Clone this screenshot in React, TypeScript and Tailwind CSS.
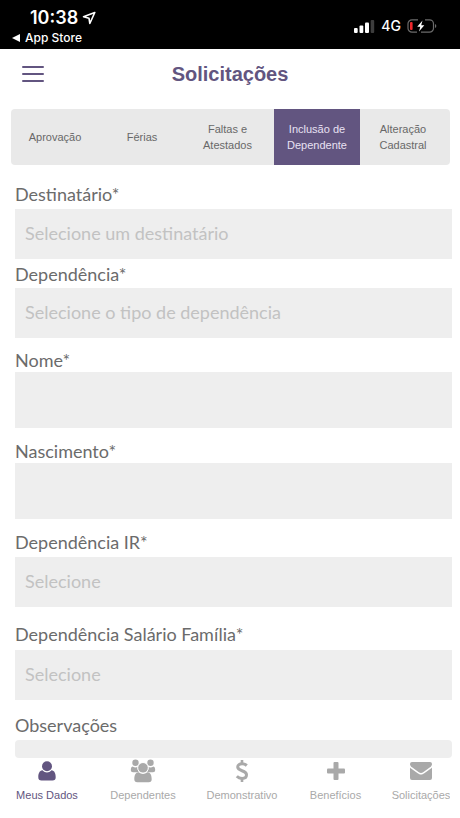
import React from "react";
import clsx from "clsx";

const tabs = [
  { label: "Aprovação", active: false },
  { label: "Férias", active: false },
  { label: "Faltas e Atestados", active: false },
  { label: "Inclusão de Dependente", active: true },
  { label: "Alteração Cadastral", active: false },
];

const fields = [
  { id: "destinatario", label: "Destinatário*", type: "select", placeholder: "Selecione um destinatário", className: "gap-1 pt-[18px]" },
  { id: "dependencia", label: "Dependência*", type: "select", placeholder: "Selecione o tipo de dependência", className: "gap-[3px] pt-1" },
  { id: "nome", label: "Nome*", type: "text", placeholder: "", className: "gap-px pt-[11px]" },
  { id: "nascimento", label: "Nascimento*", type: "text", placeholder: "", className: "gap-px pt-3" },
  { id: "dependencia-ir", label: "Dependência IR*", type: "select", placeholder: "Selecione", className: "gap-1 pt-3" },
  { id: "salario-familia", label: "Dependência Salário Família*", type: "select", placeholder: "Selecione", className: "gap-[5px] pt-4" },
];

function StatusBar() {
  return (
    <div className="flex h-[49px] shrink-0 justify-between bg-black font-['Inter',sans-serif] text-white">
      <div className="pt-[7px] pl-3">
        <div className="flex items-center gap-1 pl-[18px] text-lg leading-[22px] font-semibold">
          <span>10:38</span>
          <svg viewBox="0 0 14 14" className="h-[14px] w-[14px]" fill="none" stroke="currentColor" strokeWidth="1.6" strokeLinejoin="round">
            <path d="M12.800 1.500 1.500 5.800 7 7.200 7.800 12.500Z" />
          </svg>
        </div>
        <a href="#" className="flex items-center gap-[5px] text-xs leading-[18px] font-medium">
          <svg viewBox="0 0 8 8" className="h-2 w-2" fill="currentColor">
            <path d="M0 4 8 0V8Z" />
          </svg>
          App Store
        </a>
      </div>
      <div className="flex items-center gap-[6px] pt-[3px] pr-[23px]">
        <svg viewBox="0 0 21 14" className="h-[14px] w-[21px]">
          <rect x="0" y="9" width="3.700" height="5" rx="1" fill="#fff" />
          <rect x="5.500" y="6.500" width="3.800" height="7.500" rx="1" fill="#fff" />
          <rect x="11" y="3.500" width="4" height="10.500" rx="1" fill="#fff" />
          <rect x="16.700" y="1" width="3.500" height="13" rx="1" fill="#3d3d3d" />
        </svg>
        <span className="text-sm font-medium">4G</span>
        <svg viewBox="0 0 30 14" className="h-[14px] w-[30px]" fill="none">
          <path d="M11 .8H5A4 4 0 0 0 1 4.8V9.2A4 4 0 0 0 5 13.2H10M18 .8H22.500A4 4 0 0 1 26.500 4.800V9.200A4 4 0 0 1 22.500 13.200H14" stroke="#6b6b6b" strokeWidth="1.2" />
          <path d="M28 5v4q1.300-.6 1.300-2T28 5Z" fill="#6b6b6b" />
          <rect x="3" y="3" width="2.600" height="8" rx="1" fill="#f0282d" />
          <path d="M15.500 1.500 10.200 7.800H13.300L12 12.500 17.300 6.200H14.200Z" fill="#fff" />
        </svg>
      </div>
    </div>
  );
}

function UserIcon() {
  return (
    <svg viewBox="0 0 18 20" className="h-5 w-[18px]" fill="currentColor">
      <circle cx="9" cy="5.300" r="5" />
      <path d="M4.500 9.300C6 10.700 7.300 11.500 9 11.500S12 10.700 13.500 9.300C16.500 9.600 17.700 12.500 17.700 16.300Q17.700 19.500 14.500 19.500H3.500Q.3 19.500 .3 16.300C.3 12.500 1.500 9.600 4.500 9.300Z" />
    </svg>
  );
}

function GroupIcon() {
  return (
    <svg viewBox="0 0 26 24" className="h-6 w-[26px]" fill="currentColor">
      <circle cx="5.500" cy="3.800" r="3.200" />
      <circle cx="20.500" cy="3.800" r="3.200" />
      <path d="M2.500 7.400C4.500 8.700 6.200 8.600 7.600 8 7.500 10.500 8 12 9 13.300H3Q.8 13.300 .8 11.300C.8 9.200 1.200 7.600 2.500 7.400Z" />
      <path d="M23.500 7.400C21.500 8.700 19.800 8.600 18.400 8 18.500 10.500 18 12 17 13.300H23Q25.200 13.300 25.200 11.300C25.200 9.200 24.800 7.600 23.500 7.400Z" />
      <circle cx="13" cy="8.800" r="5.300" stroke="#fff" strokeWidth="1" />
      <path d="M8.700 13.300C10.300 14.500 11.500 15 13 15S15.700 14.500 17.300 13.300C20.500 13.500 21.700 16.300 21.700 20.300Q21.700 23.300 18.700 23.300H7.300Q4.300 23.300 4.300 20.300C4.300 16.300 5.500 13.500 8.700 13.300Z" />
    </svg>
  );
}

function DollarIcon() {
  return (
    <svg viewBox="0 0 14 24" className="h-6 w-[14px]" fill="none" stroke="currentColor">
      <path d="M7 1V4.500M7 19.500V23" strokeWidth="2.600" />
      <path d="M11.800 6.500C10.300 5.200 8.800 4.700 7 4.700 4.600 4.700 2.700 6 2.700 8.100 2.700 12.500 11.500 11 11.500 15.700 11.500 18 9.700 19.400 7.100 19.400 5 19.400 3.200 18.700 1.800 17.300" strokeWidth="3" />
    </svg>
  );
}

function PlusIcon() {
  return (
    <svg viewBox="0 0 18 18" className="h-[18px] w-[18px]" fill="currentColor">
      <rect x="6.500" y="0" width="5" height="18" rx="1" />
      <rect x="0" y="6.500" width="18" height="5" rx="1" />
    </svg>
  );
}

function EnvelopeIcon() {
  return (
    <svg viewBox="0 0 22 18" className="h-[18px] w-[22px]" fill="currentColor">
      <path d="M2 0H20Q22 0 22 2C22 3.300 21.200 4.500 20 5.300L13.500 9.900C12.500 10.600 11.800 11 11 11S9.500 10.600 8.500 9.900L2 5.300C.8 4.500 0 3.300 0 2Q0 0 2 0Z" />
      <path d="M0 5.500Q.6 6.200 1.400 6.700L7.700 11.200C9 12.100 9.900 12.600 11 12.600S13 12.100 14.300 11.200L20.600 6.700Q21.400 6.200 22 5.500V16Q22 18 20 18H2Q0 18 0 16Z" />
    </svg>
  );
}

const menu = [
  { label: "Meus Dados", icon: <UserIcon />, active: true },
  { label: "Dependentes", icon: <GroupIcon />, active: false },
  { label: "Demonstrativo", icon: <DollarIcon />, active: false },
  { label: "Benefícios", icon: <PlusIcon />, active: false },
  { label: "Solicitações", icon: <EnvelopeIcon />, active: false },
];

function App() {
  return (
    <div className="flex h-screen flex-col overflow-hidden bg-white font-['Liberation_Sans',sans-serif]">
      <StatusBar />
      <header className="grid h-[60px] shrink-0 grid-cols-[44px_1fr_44px] items-center px-[22px] pb-[11px]">
        <button type="button" aria-label="Menu" className="flex w-[22px] flex-col gap-[5px] text-[#625580]">
          <span className="h-[2px] w-full rounded bg-current" />
          <span className="h-[2px] w-full rounded bg-current" />
          <span className="h-[2px] w-full rounded bg-current" />
        </button>
        <h1 className="text-center text-xl font-bold text-[#625580]">Solicitações</h1>
      </header>
      <nav className="mr-[10px] ml-[11px] grid h-14 shrink-0 grid-cols-[92fr_82fr_89fr_86fr_90fr] overflow-hidden rounded-sm bg-[#e9e9e9]">
        {tabs.map((tab) => (
          <a
            key={tab.label}
            href="#"
            className={clsx(
              "flex items-center justify-center text-center text-[11px] leading-4",
              tab.active ? "bg-[#625580] px-3 text-[#e8e1f3]" : "pr-4 pl-3 text-[#686868]"
            )}
          >
            {tab.label}
          </a>
        ))}
      </nav>
      <form className="flex min-h-0 flex-1 flex-col overflow-hidden pr-2 pl-[15px] font-['Lato',sans-serif] text-[#6b6b6b]">
        {fields.map((field) => (
          <div key={field.id} className={clsx("flex shrink-0 flex-col", field.className)}>
            <label htmlFor={field.id} className="text-lg leading-[22px]">
              {field.label}
            </label>
            {field.type === "select" ? (
              <select id={field.id} className="h-[50px] w-full appearance-none bg-[#eeeeee] px-[10px] pb-[2px] text-lg text-[#c2c2c2]">
                <option>{field.placeholder}</option>
              </select>
            ) : (
              <input id={field.id} type="text" className="h-14 w-full bg-[#eeeeee] px-[10px] text-lg" />
            )}
          </div>
        ))}
        <div className="flex min-h-0 flex-1 flex-col gap-1 pt-[14px]">
          <label htmlFor="observacoes" className="text-lg leading-[22px]">
            Observações
          </label>
          <textarea id="observacoes" className="min-h-0 w-full flex-1 resize-none rounded-sm bg-[#eeeeee]" />
        </div>
      </form>
      <nav className="mr-[10px] grid h-[60px] shrink-0 grid-cols-[minmax(0,94fr)_minmax(0,98fr)_minmax(0,100fr)_minmax(0,87fr)_minmax(0,71fr)] overflow-hidden">
        {menu.map((item) => (
          <a
            key={item.label}
            href="#"
            className={clsx(
              "flex min-w-[84px] flex-col items-center text-[11px] leading-[14px]",
              item.active ? "text-[#625580]" : "text-[#a9a9a9]"
            )}
          >
            <span className="flex h-[30px] items-center pb-1">{item.icon}</span>
            {item.label}
          </a>
        ))}
      </nav>
    </div>
  );
}

export default App;
